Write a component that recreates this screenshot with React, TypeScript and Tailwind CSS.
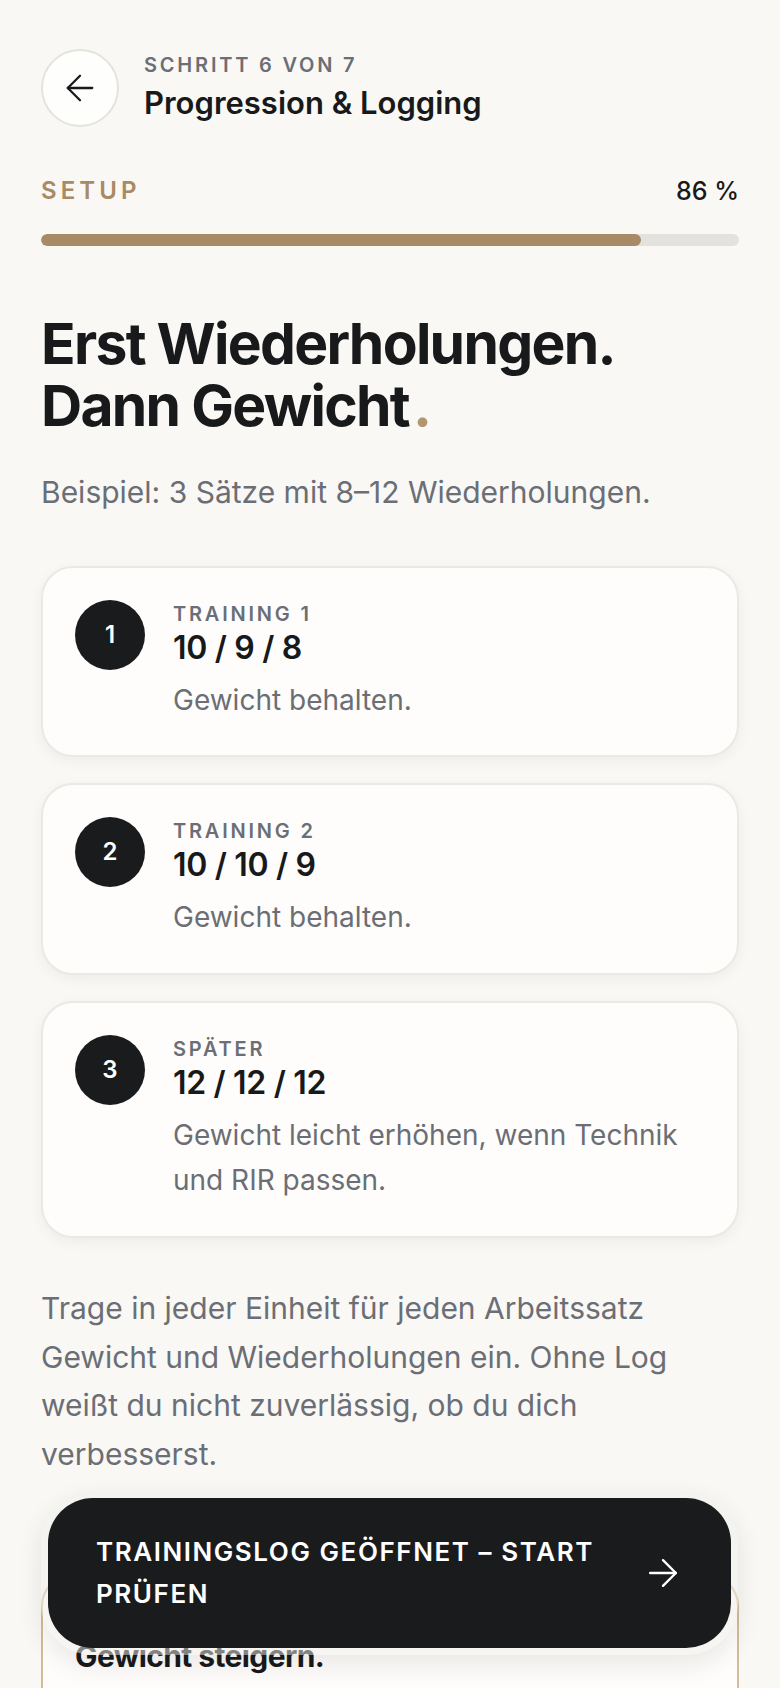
import { ArrowLeft, ArrowRight } from 'lucide-react'

type Step = {
  num: number
  label: string
  reps: string
  text: string
}

const steps: Step[] = [
  { num: 1, label: 'Training 1', reps: '10 / 9 / 8', text: 'Gewicht behalten.' },
  { num: 2, label: 'Training 2', reps: '10 / 10 / 9', text: 'Gewicht behalten.' },
  { num: 3, label: 'Später', reps: '12 / 12 / 12', text: 'Gewicht leicht erhöhen, wenn Technik und RIR passen.' },
]

const progress = 86

function StepCard({ step }: { step: Step }) {
  return (
    <div className="flex items-start gap-[28px] rounded-[32px] border-2 border-[#ece9e4] bg-[#fefdfb] p-8 shadow-[0_4px_14px_rgba(30,25,15,0.05)]">
      <div className="flex h-[70px] w-[70px] flex-shrink-0 items-center justify-center rounded-full bg-[#1a1b1d] text-[24px] font-semibold text-white">
        {step.num}
      </div>
      <div className="min-w-0 flex-1">
        <p className="text-[20px] font-semibold uppercase leading-[28px] tracking-[0.14em] text-[#6b6e75]">
          {step.label}
        </p>
        <p className="text-[32px] font-semibold leading-[40px] tracking-[-0.01em] text-[#18191b]">{step.reps}</p>
        <p className="mt-[10px] text-[28px] leading-[1.625] text-[#6b6e75]">{step.text}</p>
      </div>
    </div>
  )
}

export default function App() {
  return (
    <div className="min-h-screen bg-[#f9f8f5] font-['Inter',sans-serif] text-[#18191b]">
      <div className="px-[41px] pb-[260px] pt-[49px]">
        {/* header */}
        <div className="flex items-center gap-[25px]">
          <button className="flex h-[78px] w-[78px] flex-shrink-0 items-center justify-center rounded-full border-2 border-[#e6e3de] bg-[#fefefd]">
            <ArrowLeft size={42} strokeWidth={1.3} className="text-[#18191b]" />
          </button>
          <div className="-mt-[2px]">
            <p className="text-[20px] font-semibold uppercase leading-[28px] tracking-[0.14em] text-[#6b6e75]">
              Schritt 6 von 7
            </p>
            <p className="mt-[4px] text-[31px] font-semibold leading-[40px]">Progression &amp; Logging</p>
          </div>
        </div>

        {/* progress */}
        <div className="mt-[48px] flex items-center justify-between">
          <span className="text-[24px] font-semibold uppercase leading-[32px] tracking-[0.17em] text-[#a88a66]">Setup</span>
          <span className="text-[25px] font-medium leading-[32px]">{progress}&nbsp;%</span>
        </div>
        <div className="mt-[27px] h-[12px] w-full overflow-hidden rounded-full bg-[#e4e2de]">
          <div className="h-full rounded-full bg-[#a88a66]" style={{ width: `${progress}%` }} />
        </div>

        {/* heading */}
        <h1 className="mt-[67px] text-[57px] font-bold leading-[62px] tracking-[-0.03em]">
          Erst Wiederholungen.
          <br />
          Dann Gewicht<span className="ml-[4px] text-[#b39670]">.</span>
        </h1>
        <p className="mt-[31px] text-[30px] leading-[1.625] text-[#6b6e75]">
          Beispiel: 3 Sätze mit 8–12 Wiederholungen.
        </p>

        <div className="mt-[49px] flex flex-col gap-[26px]">
          {steps.map((s) => (
            <StepCard key={s.num} step={s} />
          ))}
        </div>

        <p className="mt-[46px] text-[30px] leading-[1.625] text-[#6b6e75]">
          Trage in jeder Einheit für jeden Arbeitssatz Gewicht und Wiederholungen ein. Ohne Log weißt du nicht
          zuverlässig, ob du dich verbesserst.
        </p>

        <div className="mt-[95px] rounded-[32px] border-2 border-[#d5bb98] bg-[#fefdfb] px-8 pb-8 pt-8">
          <p className="text-[20px] font-semibold uppercase leading-[30px] tracking-[0.14em] text-[#a88a66]">Faustregel</p>
          <p className="text-[30px] font-bold leading-[36px] tracking-[-0.02em]">Gewicht steigern.</p>
          <p className="mt-[32px] text-[28px] leading-[1.625] text-[#6b6e75]">
            Danach wieder mit weniger Wiederholungen beginnen.
          </p>
        </div>
      </div>

      {/* sticky cta */}
      <div className="fixed bottom-[33px] left-[41px] right-[42px] rounded-[52px] bg-[#eeede9]/50 p-[7px] shadow-[0_10px_26px_rgba(20,20,20,0.09)]">
        <button className="flex w-full items-center justify-between gap-6 rounded-[45px] bg-[#1a1b1d] py-[33px] pl-[48px] pr-[46px] text-left">
          <span className="text-[26px] font-semibold uppercase leading-[42px] tracking-[0.06em] text-white">
            Trainingslog geöffnet – Start prüfen
          </span>
          <ArrowRight size={44} strokeWidth={1.3} className="flex-shrink-0 text-white" />
        </button>
      </div>
    </div>
  )
}
